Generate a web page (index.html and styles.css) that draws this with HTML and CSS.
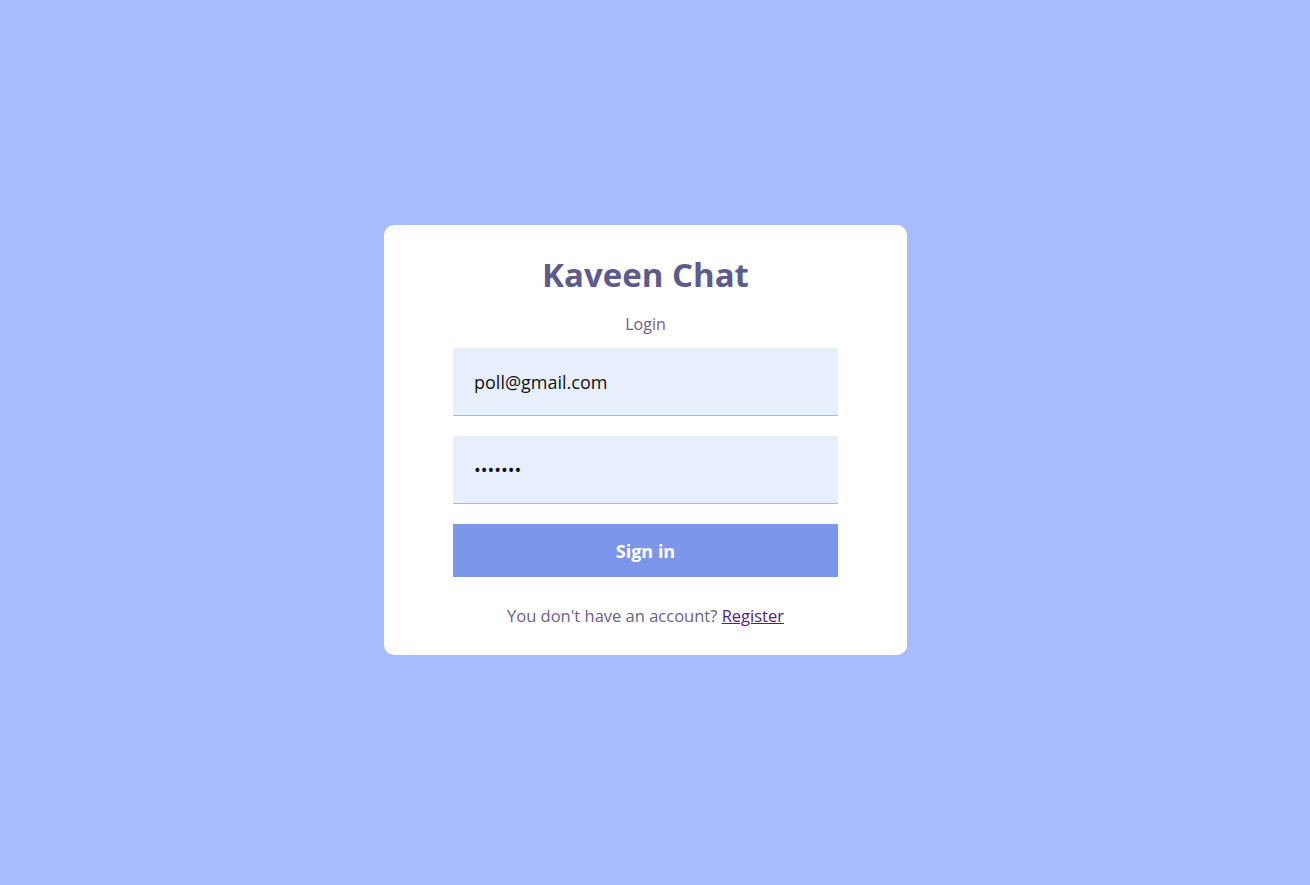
FILE: index.html
```html
<!DOCTYPE html>
<html lang="en">
<head>
<meta charset="utf-8">
<title>Kaveen Chat</title>
<link rel="stylesheet" href="styles.css">
</head>
<body>
<div class="page">
  <form class="card">
    <h1 class="title">Kaveen Chat</h1>
    <p class="subtitle">Login</p>
    <input class="field" type="email" value="poll@gmail.com">
    <input class="field field-pass" type="password" value="1234567">
    <button class="btn" type="button">Sign in</button>
    <p class="footer">You don't have an account? <a href="#" class="link">Register</a></p>
  </form>
</div>
</body>
</html>
```
FILE: styles.css
```css
* { box-sizing: border-box; }
html, body { margin: 0; padding: 0; height: 100%; }
body {
  background: #a7bcfe;
  font-family: "Open Sans", "Noto Sans", sans-serif;
}
.page {
  height: 100%;
  display: flex;
  align-items: center;
  justify-content: center;
  padding: 0 19px 5px 0;
}
.card {
  width: 523px;
  height: 430px;
  background: #ffffff;
  border-radius: 10px;
  padding: 26px 69px 0;
  display: flex;
  flex-direction: column;
  align-items: stretch;
}
.title {
  margin: 0;
  text-align: center;
  font-size: 33px;
  font-weight: 700;
  line-height: 48px;
  color: #5d5b8d;
}
.subtitle {
  margin: 14px 0 13px;
  text-align: center;
  font-size: 16px;
  line-height: 22px;
  color: #785d8e;
}
.field {
  display: block;
  width: 100%;
  height: 68px;
  border: none;
  border-bottom: 1px solid #a8b9ee;
  background: #e8effc;
  padding: 0 21px;
  font-family: inherit;
  font-size: 18px;
  color: #111111;
  outline: none;
}
.field-pass { margin-top: 20px; }
.btn {
  display: block;
  width: 100%;
  height: 53px;
  margin-top: 20px;
  border: none;
  background: #7c96eb;
  color: #ffffff;
  font-family: inherit;
  font-size: 18px;
  font-weight: 700;
  cursor: pointer;
}
.footer {
  margin: 28px 0 0;
  text-align: center;
  font-size: 16.5px;
  line-height: 22px;
  color: #6f5d8b;
}
.link { color: #551a8b; text-decoration: underline; }
```
